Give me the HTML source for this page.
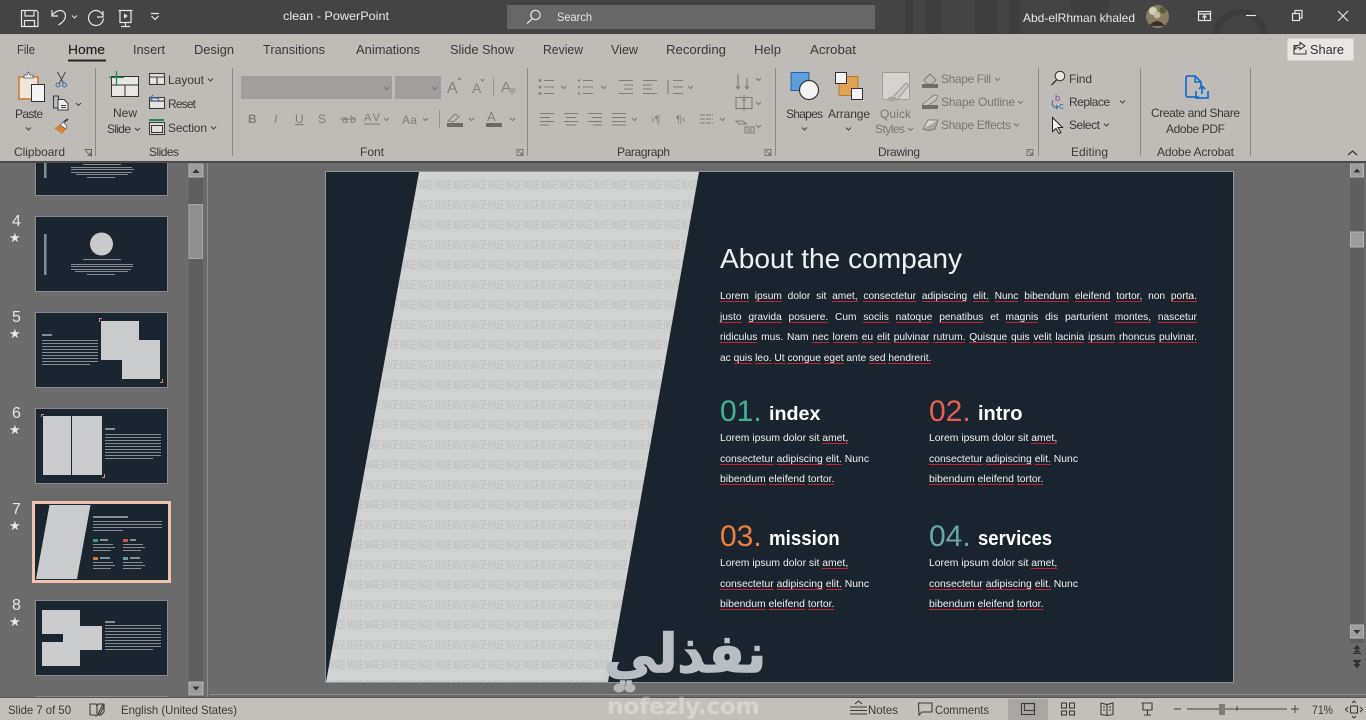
<!DOCTYPE html>
<html lang="en"><head><meta charset="utf-8"><title>clean - PowerPoint</title>
<style>
html,body{margin:0;padding:0;background:#6b6b6b;width:1366px;height:720px;overflow:hidden}
body{position:relative;font-family:"Liberation Sans",sans-serif}
svg{position:absolute;left:0;top:0}
svg text{font-family:"Liberation Sans",sans-serif}
.t{font-size:12px;fill:#3a3a3a}
.tb{font-size:13px;fill:#3a3a3a}
.d{font-size:12px;fill:#787674}
.w{fill:#e8e8e8;font-size:12px}
.i{fill:none;stroke:#3c3c3c;stroke-width:1.1}
.g{fill:none;stroke:#7f7d7b;stroke-width:1.1}
.tw{fill:none;stroke:#e6e6e6;stroke-width:1.2}
.ch{fill:none;stroke:#444;stroke-width:1}
.chg{fill:none;stroke:#777;stroke-width:1}
.a{position:absolute;white-space:nowrap;color:#f0f0f0}
.img{position:absolute;left:326px;top:172px;width:907px;height:510px;background:#d1d2d2;clip-path:polygon(93px 0,373px 0,282px 510px,0 510px);overflow:hidden}
.img pre{position:absolute;left:3px;top:3px;margin:0;font:12.5px/20px "Liberation Sans",sans-serif;color:#bcbcbc;transform:scaleX(.403);transform-origin:0 0}
.l{left:720px;width:477px;font-size:10.2px;line-height:14px;text-align:justify;text-align-last:justify;white-space:normal}
.s{font-size:10.4px;line-height:14px}
u{text-decoration:none;background:repeating-linear-gradient(90deg,#dc2030 0 2px,#8f2a38 2px 3px) left bottom/100% 1.500px no-repeat}
.n{font-size:30px;line-height:34px}
.h{font-size:20px;font-weight:700;line-height:26px;color:#fff;transform-origin:0 0}
</style></head><body>
<svg width="1366" height="720" viewBox="0 0 1366 720">
<!-- backgrounds -->
<rect width="1366" height="720" fill="#6b6b6b"/>
<rect width="1366" height="34" fill="#444"/>
<g fill="#3e3e3e"><rect x="905" y="0" width="8" height="34"/><rect x="925" y="0" width="16" height="34"/><rect x="975" y="0" width="22" height="34"/><rect x="1010" y="0" width="10" height="34"/><circle cx="1090" cy="0" r="20"/><circle cx="1240" cy="36" r="24" fill="none" stroke="#3c3c3c" stroke-width="6"/></g>
<rect y="34" width="1366" height="127" fill="#bfbcb8"/>
<rect y="161" width="1366" height="2" fill="#4a4a49"/>
<rect x="189" y="163" width="14" height="535" fill="#5e5e5e"/>
<rect x="207" y="163" width="1" height="535" fill="#8e8e8e"/>
<rect x="1350" y="163" width="14" height="480" fill="#5f5f5f"/>
<rect x="210" y="694" width="1156" height="1" fill="#8f8f8f"/>

<!-- title bar -->
<g class="tw"><path d="M21.500 10.500h15l1.500 1.500v14.500h-16.500z"/><path d="M25 10.500v5.500h9v-5.500M24.500 26.500v-6h10v6"/></g>
<path class="tw" d="M52 10v6h6M52 15.500c3-3.500 5.500-5 8-5 3.500 0 5.500 2.500 5.500 5.500 0 3-2 6-7 9"/>
<path d="M72 15.500l2.500 2.500 2.500-2.500" fill="none" stroke="#ddd"/>
<path class="tw" d="M103 11v6h-6M103 15c-2-3-4.500-4.500-7-4.500-4 0-7.500 3.400-7.500 7.500s3.400 7.500 7.500 7.500 7-3 7.500-7"/>
<g class="tw"><path d="M118.500 10.500h14M120 10.500v12h11v-12M125.500 22.500v3.500M121 26.500h9"/></g><path d="M124 13.500l4 2.500-4 2.500z" fill="#e6e6e6"/>
<path d="M151 13.500h8M151.500 16l3.500 3.500 3.500-3.500" fill="none" stroke="#e6e6e6" stroke-width="1.200"/>
<text class="w" x="283" y="20" textLength="106" lengthAdjust="spacingAndGlyphs">clean  -  PowerPoint</text>
<rect x="507" y="5" width="368" height="24" fill="#676767"/>
<circle cx="535.500" cy="15" r="4.700" class="tw"/><path d="M532 19l-5 4.500" class="tw"/>
<text x="557" y="21" font-size="12" fill="#e4e4e4" textLength="35" lengthAdjust="spacingAndGlyphs">Search</text>
<text class="w" x="1023" y="22" textLength="112" lengthAdjust="spacingAndGlyphs">Abd-elRhman khaled</text>
<circle cx="1157.500" cy="16.500" r="11.500" fill="#8a7d63"/><circle cx="1153" cy="11" r="4" fill="#cfd1b8"/><circle cx="1163" cy="10" r="3.500" fill="#55603a"/><circle cx="1157" cy="15" r="3.400" fill="#c9b6a0"/><path d="M1149 26q8-10 16 0z" fill="#3c2f28"/>
<g class="tw"><rect x="1198.500" y="11.500" width="12" height="9"/><path d="M1198.500 14h12M1204.500 20v-4M1202.500 17.500l2-2 2 2"/></g>
<path d="M1246 15.500h10" class="tw"/>
<g class="tw"><rect x="1292.500" y="13.500" width="7" height="7"/><path d="M1295 13v-2.500h7v7.500h-2.500"/></g>
<path d="M1338 11l10 10M1348 11l-10 10" class="tw"/>

<!-- tabs -->
<text class="tb" x="17" y="54" textLength="18" lengthAdjust="spacingAndGlyphs">File</text>
<text x="68" y="54" textLength="37" lengthAdjust="spacingAndGlyphs" style="font-size:13px;fill:#222;stroke:#222;stroke-width:.2">Home</text>
<text class="tb" x="133" y="54" textLength="32" lengthAdjust="spacingAndGlyphs">Insert</text>
<text class="tb" x="194" y="54" textLength="40" lengthAdjust="spacingAndGlyphs">Design</text>
<text class="tb" x="263" y="54" textLength="62" lengthAdjust="spacingAndGlyphs">Transitions</text>
<text class="tb" x="356" y="54" textLength="64" lengthAdjust="spacingAndGlyphs">Animations</text>
<text class="tb" x="450" y="54" textLength="64" lengthAdjust="spacingAndGlyphs">Slide Show</text>
<text class="tb" x="543" y="54" textLength="40" lengthAdjust="spacingAndGlyphs">Review</text>
<text class="tb" x="611" y="54" textLength="27" lengthAdjust="spacingAndGlyphs">View</text>
<text class="tb" x="666" y="54" textLength="60" lengthAdjust="spacingAndGlyphs">Recording</text>
<text class="tb" x="754" y="54" textLength="27" lengthAdjust="spacingAndGlyphs">Help</text>
<text class="tb" x="810" y="54" textLength="46" lengthAdjust="spacingAndGlyphs">Acrobat</text>
<rect x="68" y="59.500" width="38" height="2" fill="#222"/>
<rect x="1287.500" y="38.500" width="66" height="22" rx="1.500" fill="#e9e7e4" stroke="#d4d2cf"/>
<path d="M1294 47.500v-2h3M1300 42.500l5 3.500-5 3.500v-2c-3 0-5 1-6 3 0-3 2-5 6-5.500zM1294 47v7h12v-4" class="i"/>
<text x="1310" y="54" font-size="13" fill="#2e2e2e" textLength="34" lengthAdjust="spacingAndGlyphs">Share</text>

<!-- separators -->
<g fill="#8b8986"><rect x="95" y="68" width="1" height="88"/><rect x="232" y="68" width="1" height="88"/><rect x="527" y="68" width="1" height="88"/><rect x="775" y="68" width="1" height="88"/><rect x="1038" y="68" width="1" height="88"/><rect x="1140" y="68" width="1" height="88"/><rect x="1250" y="68" width="1" height="88"/></g>

<!-- clipboard -->
<path d="M19 77h19v22H19z" fill="#efe6d9" stroke="#c57f33" stroke-width="1.600"/><path d="M24 77v-2h3l1.500-3 1.500 3h3v3h-9z" fill="#efefef" stroke="#555" stroke-width=".8"/>
<rect x="31.500" y="84.500" width="13" height="17" fill="#f5f5f5" stroke="#333"/>
<text class="t" x="15" y="118" textLength="28">Paste</text><path class="ch" d="M26 127.500l2.500 2.500 2.500-2.500"/>
<path d="M57.500 72l6 11M65.500 72l-6 11" stroke="#444" fill="none"/><circle cx="58" cy="85" r="2" fill="none" stroke="#3a6ea8"/><circle cx="64.500" cy="85" r="2" fill="none" stroke="#3a6ea8"/>
<path class="i" d="M53.500 96h5v12h-5z"/><path d="M58 99.500h6l4 4v6.500h-10z" fill="#eee" stroke="#3c3c3c"/><path d="M61 105.500h5M61 107.500h5" stroke="#444" fill="none"/><path class="ch" d="M76 103l2.500 2.500 2.500-2.500"/>
<path d="M54 128l6-3 6 4-4 5z" fill="#d28433"/><path d="M60 125l3-3 4 4-1 3z" fill="#eee" stroke="#555" stroke-width=".7"/><path d="M64 122l4-3" stroke="#444" stroke-width="2"/>

<!-- slides -->
<rect x="111.500" y="76.500" width="27" height="20" fill="#e9e7e4" stroke="#333"/><path d="M112 85h26M125 85v11" stroke="#333" fill="none"/>
<path d="M109 77.500h15M116.500 71v15" stroke="#1f8a58" stroke-width="1.300" fill="none"/>
<text class="t" x="113" y="117" textLength="24">New</text><text class="t" x="107" y="133" textLength="24">Slide</text><path class="ch" d="M135 128l2.500 2.500 2.500-2.500"/>
<g class="i"><rect x="149.500" y="73.500" width="15" height="11" fill="#e4e2df"/><path d="M150 77h14M157 77v7"/></g>
<text class="t" x="168" y="84" textLength="36">Layout</text><path class="ch" d="M208 78.500l2.500 2.500 2.500-2.500"/>
<g class="i"><rect x="149.500" y="97.500" width="15" height="11" fill="#e4e2df"/><path d="M150 101h14"/></g><path d="M150 98l3-3M150 98l3 3M150 98h6q3 0 3 4" stroke="#3f72ad" fill="none" stroke-width="1.200"/>
<text class="t" x="168" y="108" textLength="28">Reset</text>
<rect x="149" y="119" width="15" height="2" fill="#1f8a58"/><g class="i"><rect x="149.500" y="122.500" width="15" height="12" fill="#e4e2df"/><rect x="151.500" y="125.500" width="11" height="7"/></g>
<text class="t" x="168" y="132" textLength="39">Section</text><path class="ch" d="M211 126.500l2.500 2.500 2.500-2.500"/>

<!-- font -->
<rect x="241" y="76" width="151" height="23" fill="#a09f9d"/><rect x="395" y="76" width="46" height="23" fill="#a09f9d"/>
<path class="chg" d="M384 87l2.500 2.500 2.500-2.500M432 87l2.500 2.500 2.500-2.500"/>
<text x="447" y="93" font-size="16" fill="#85837f">A</text><text x="472" y="93" font-size="14" fill="#85837f">A</text>
<path class="chg" d="M458 80l1.500-2 1.500 2M481 79l1.500 2 1.500-2"/>
<rect x="493" y="77" width="1" height="20" fill="#9a9896"/>
<text x="501" y="92" font-size="15" fill="#85837f">A</text><path d="M510 88l5 0 1 3-4 4-3-3z" fill="#a7a5a2"/>
<g fill="#7f7d7b"><text x="248" y="123" font-size="12" font-weight="700">B</text><text x="274" y="123" font-size="12" font-style="italic">I</text><text x="295" y="123" font-size="12" style="text-decoration:underline">U</text><text x="318" y="123" font-size="12">S</text><text x="342" y="123" font-size="11" textLength="14">ab</text><text x="364" y="121" font-size="11" textLength="16">AV</text><text x="402" y="124" font-size="12" textLength="15">Aa</text></g>
<path d="M340 119h16M364 124h16" stroke="#7f7d7b" fill="none"/>
<path class="chg" d="M384 118l2.500 2.500 2.500-2.500M423 118l2.500 2.500 2.500-2.500M469 118l2.500 2.500 2.500-2.500M510 118l2.500 2.500 2.500-2.500"/>
<rect x="439" y="110" width="1" height="18" fill="#9a9896"/>
<path d="M448 121l7-7 4 3-6 5z" fill="none" stroke="#7f7d7b"/><rect x="447" y="123" width="16" height="4" fill="#6c6b69"/>
<text x="487" y="121" font-size="13" fill="#7f7d7b">A</text><rect x="486" y="123" width="16" height="4" fill="#6c6b69"/>
<text class="t" x="360" y="156" textLength="24">Font</text><path d="M517 149.500h6v6h-6z" fill="none" stroke="#777"/><path d="M518 150.500l4 4M522.500 152.500v2.500h-2.500" fill="none" stroke="#777"/>

<!-- paragraph -->
<g class="g">
<path d="M544 80.500h10M544 87h10M544 93.500h10M583 80.500h10M583 87h10M583 93.500h10"/>
<path d="M619 80.500h14M624 85h9M624 89h9M619 93.500h14M643 80.500h14M643 85h9M643 89h9M643 93.500h14"/>
<path d="M673 80.500h10M673 87h10M673 93.500h10M668 80v14"/>
<path d="M540 113.500h14M540 117.500h10M540 121.500h14M540 125h9M564 113.500h14M566 117.500h10M564 121.500h14M566 125h10M588 113.500h14M592 117.500h10M588 121.500h14M593 125h9M612 113.500h14M612 117.500h14M612 121.500h14M612 125h14"/>
<path d="M700 115h13M700 119h13M700 123h13" stroke-dasharray="5 1"/>
<path d="M738 74v15M736 86l2 3 2-3M747 78v11M745 86l2 3 2-3"/>
<rect x="736" y="97.500" width="16" height="11"/><path d="M744 95v16M742 100h4"/>
<path d="M736 121l7 0 3 3h-7zM745 127h9v6h-9zM747 129h5M747 131h5"/>
</g>
<g fill="#8a8886"><circle cx="540" cy="80.500" r="1.500"/><circle cx="540" cy="87" r="1.500"/><circle cx="540" cy="93.500" r="1.500"/><circle cx="579" cy="80.500" r="1.200"/><circle cx="579" cy="87" r="1.200"/><circle cx="579" cy="93.500" r="1.200"/></g>
<text x="651" y="123" font-size="11" fill="#7f7d7b">›¶</text><text x="676" y="123" font-size="11" fill="#7f7d7b">¶‹</text>
<path class="chg" d="M561 86l2.500 2.500 2.500-2.500M601 86l2.500 2.500 2.500-2.500M688 86l2.500 2.500 2.500-2.500M632 118l2.500 2.500 2.500-2.500M720 118l2.500 2.500 2.500-2.500M756 78l2.500 2.500 2.500-2.500M756 102l2.500 2.500 2.500-2.500M756 125l2.500 2.500 2.500-2.500"/>
<text class="t" x="617" y="156" textLength="53">Paragraph</text><path d="M765 149.500h6v6h-6z" fill="none" stroke="#777"/><path d="M766 150.500l4 4M770.500 152.500v2.500h-2.500" fill="none" stroke="#777"/>

<!-- drawing -->
<rect x="791" y="72.500" width="18" height="18" fill="#5a9fde" stroke="#2e5f96"/><circle cx="809" cy="90" r="9.500" fill="#f5f5f5" stroke="#333" stroke-width="1.200"/>
<text class="t" x="786" y="118" textLength="37">Shapes</text><path class="ch" d="M802 127.500l2.500 2.500 2.500-2.500"/>
<rect x="839" y="76.500" width="19" height="19" fill="#dfa155" stroke="#b97a2c"/><rect x="835.500" y="72.500" width="11" height="11" fill="#f3f3f3" stroke="#333"/><rect x="851.500" y="88.500" width="11" height="11" fill="#f3f3f3" stroke="#333"/>
<text class="t" x="828" y="118" textLength="42">Arrange</text><path class="ch" d="M846 127.500l2.500 2.500 2.500-2.500"/>
<rect x="882.500" y="72.500" width="27" height="27" rx="1.500" fill="#d5d3d0" stroke="#a09e9b"/><path d="M892 98l14-15 3 2-12 15z" fill="#c9c7c4" stroke="#9a9896"/><ellipse cx="892" cy="99" rx="4.500" ry="2.500" fill="#a9a7a4"/>
<text class="d" x="880" y="118" textLength="31">Quick</text><text class="d" x="875" y="133" textLength="30">Styles</text><path class="chg" d="M908 128l2.500 2.500 2.500-2.500"/>
<path d="M924 80l6-6 6 6-4 4h-5z" fill="#bdbbb8" stroke="#7f7d7b"/><rect x="922" y="84" width="16" height="4" fill="#6f6e6c"/>
<text class="d" x="941" y="83" textLength="50">Shape Fill</text><path class="chg" d="M995 78l2.500 2.500 2.500-2.500"/>
<path d="M923 104l11-9 4 1-2 4-9 6h-4z" fill="#c9c7c4" stroke="#8a8886"/><rect x="922" y="105" width="16" height="4" fill="#6f6e6c"/>
<text class="d" x="941" y="106" textLength="74">Shape Outline</text><path class="chg" d="M1018 101l2.500 2.500 2.500-2.500"/>
<path d="M923 129l5-9h10l-3 9z" fill="#d8d6d3" stroke="#7f7d7b"/><path d="M923 129q6 3 12 0l3-9" fill="#a9a7a4" stroke="#7f7d7b"/>
<text class="d" x="941" y="129" textLength="70">Shape Effects</text><path class="chg" d="M1014 123.500l2.500 2.500 2.500-2.500"/>
<text class="t" x="878" y="156" textLength="42">Drawing</text><path d="M1027 149.500h6v6h-6z" fill="none" stroke="#777"/><path d="M1028 150.500l4 4M1032.500 152.500v2.500h-2.500" fill="none" stroke="#777"/>

<!-- editing -->
<circle cx="1060" cy="76" r="4.800" fill="#e8e6e3" stroke="#333"/><path d="M1056.500 80l-5 5" stroke="#333" stroke-width="1.300"/>
<text class="t" x="1069" y="83" textLength="23">Find</text>
<text x="1055" y="101" font-size="9.500" fill="#a13c9c">b</text><text x="1059" y="109" font-size="9.500" fill="#2c6fb3">c</text><path d="M1053 100q-2 5 1 7h4M1056 105l2 2-2 2" stroke="#2c6fb3" fill="none"/>
<text class="t" x="1069" y="106" textLength="41">Replace</text><path class="ch" d="M1120 100.500l2.500 2.500 2.500-2.500"/>
<path d="M1052.500 117.500v14l3.500-3 3 5 2-1-3-5h4.500z" fill="#efefef" stroke="#222"/>
<text class="t" x="1069" y="129" textLength="31">Select</text><path class="ch" d="M1104 123.500l2.500 2.500 2.500-2.500"/>
<text class="t" x="1071" y="156" textLength="37">Editing</text>

<!-- acrobat -->
<path d="M1199 97h-11c-1.500 0-2-1-2-2V78c0-1.500 1-2 2-2h7l6 6v5" fill="none" stroke="#1b6fd0" stroke-width="1.800"/><path d="M1195 76v6h6" fill="none" stroke="#1b6fd0" stroke-width="1.500"/>
<path d="M1196 91v7h12v-7M1202 94v-8M1199 89l3-3 3 3" fill="none" stroke="#1b6fd0" stroke-width="1.800"/>
<text class="t" x="1151" y="117" textLength="89">Create and Share</text><text class="t" x="1166" y="133" textLength="59">Adobe PDF</text>
<text class="t" x="1157" y="156" textLength="77">Adobe Acrobat</text>
<path d="M1348 155l4.500-4 4.500 4" fill="none" stroke="#333" stroke-width="1.200"/>

<!-- left scrollbar -->
<rect x="189" y="164" width="14" height="13" fill="#9c9c9c" stroke="#b5b5b5"/><path d="M192.500 173l3.500-4 3.500 4z" fill="#333"/>
<rect x="189" y="204.500" width="13.500" height="54" fill="#8f8f8f" stroke="#a8a8a8"/>
<rect x="189" y="682" width="14" height="13" fill="#9c9c9c" stroke="#b5b5b5"/><path d="M192.500 686.500l3.500 4 3.500-4z" fill="#333"/>
<!-- right scrollbar -->
<rect x="1350.500" y="164" width="13" height="13" fill="#9c9c9c" stroke="#b5b5b5"/><path d="M1353.500 172.500l3.500-4 3.500 4z" fill="#333"/>
<rect x="1350.500" y="232" width="13" height="15" fill="#9c9c9c" stroke="#b5b5b5"/>
<rect x="1350.500" y="625" width="13" height="13" fill="#9c9c9c" stroke="#b5b5b5"/><path d="M1353.500 630l3.500 4 3.500-4z" fill="#333"/>
<g fill="#333"><path d="M1353.500 649l3.500-4.500 3.500 4.500zM1353.500 652.500l3.500-4 3.500 4zM1353 653h8v1h-8z"/><path d="M1353.500 664l3.500 4.500 3.500-4.500zM1353.500 661l3.500 4 3.500-4zM1353 660h8v1h-8z"/></g>

<!-- thumbnails -->
<g fill="#1b2530" stroke="#8a8a8a"><rect x="35.500" y="150" width="132" height="45.500"/><rect x="35.500" y="216.500" width="132" height="75"/><rect x="35.500" y="312.500" width="132" height="75"/><rect x="35.500" y="408.500" width="132" height="75"/><rect x="35.500" y="600.500" width="132" height="75"/><rect x="35.500" y="696.500" width="132" height="10"/></g>
<rect x="33.500" y="502.500" width="136" height="79" fill="#1b2530" stroke="#f0c3b0" stroke-width="3"/>
<g fill="#c9cbcc">
<circle cx="101.500" cy="244" r="11.500" fill="#c8cacb"/>
<rect x="101" y="321" width="38" height="39"/><rect x="122" y="340" width="38" height="39"/>
<rect x="43" y="416" width="28" height="59"/><rect x="72" y="416" width="30" height="59"/>
<path d="M49.500 505h41l-13.500 74H36z"/>
<path d="M42 610h38v16h22v24H80v16H42v-24h21v-8H42z"/>
</g>
<g fill="#d28a83"><path d="M99 318h3v1h-2v3h-1zM163 383h-3v-1h2v-3h1zM41 414h3v1h-2v2h-1zM105 478h-3v-1h2v-3h1z"/></g>
<g fill="#c9cbce" opacity=".62">
<rect x="71" y="167" width="61" height="1"/><rect x="71" y="169" width="63" height="1"/><rect x="71" y="172" width="61" height="1"/><rect x="76" y="174" width="52" height="1"/><rect x="83" y="164" width="38" height="1"/><rect x="87" y="177" width="28" height="1"/>
<rect x="83" y="259" width="38" height="1"/><rect x="71" y="264" width="62" height="1"/><rect x="71" y="266" width="62" height="1"/><rect x="71" y="269" width="60" height="1"/><rect x="75" y="271" width="53" height="1"/><rect x="87" y="274" width="28" height="1"/>
<rect x="44" y="234" width="2.500" height="41"/><rect x="44" y="163" width="2.500" height="15"/>
<rect x="42" y="334" width="10" height="2"/><rect x="42" y="340" width="56" height="1"/><rect x="42" y="343" width="56" height="1"/><rect x="42" y="346" width="56" height="1"/><rect x="42" y="349" width="56" height="1"/><rect x="42" y="352" width="56" height="1"/><rect x="42" y="355" width="56" height="1"/><rect x="42" y="358" width="56" height="1"/><rect x="42" y="361" width="56" height="1"/><rect x="42" y="364" width="48" height="1"/>
<rect x="105" y="428" width="10" height="2"/><rect x="105" y="434" width="56" height="1"/><rect x="105" y="437" width="56" height="1"/><rect x="105" y="440" width="56" height="1"/><rect x="105" y="443" width="56" height="1"/><rect x="105" y="446" width="56" height="1"/><rect x="105" y="449" width="56" height="1"/><rect x="105" y="452" width="56" height="1"/><rect x="105" y="455" width="56" height="1"/><rect x="105" y="458" width="48" height="1"/>
<rect x="105" y="621" width="10" height="2"/><rect x="105" y="625" width="56" height="1"/><rect x="105" y="628" width="56" height="1"/><rect x="105" y="631" width="56" height="1"/><rect x="105" y="634" width="56" height="1"/><rect x="105" y="637" width="56" height="1"/><rect x="105" y="640" width="56" height="1"/><rect x="105" y="643" width="56" height="1"/><rect x="105" y="646" width="56" height="1"/><rect x="105" y="649" width="48" height="1"/>
<rect x="93" y="516" width="35" height="2"/><rect x="93" y="521" width="69" height="1"/><rect x="93" y="524" width="69" height="1"/><rect x="93" y="527" width="69" height="1"/><rect x="93" y="530" width="30" height="1"/>
<rect x="100" y="539" width="8" height="2"/><rect x="130" y="539" width="6" height="2"/><rect x="100" y="557" width="10" height="2"/><rect x="130" y="557" width="10" height="2"/>
<rect x="93" y="544" width="20" height="1"/><rect x="93" y="547" width="22" height="1"/><rect x="93" y="550" width="18" height="1"/><rect x="123" y="544" width="20" height="1"/><rect x="123" y="547" width="22" height="1"/><rect x="123" y="550" width="18" height="1"/>
<rect x="93" y="562" width="20" height="1"/><rect x="93" y="565" width="22" height="1"/><rect x="93" y="568" width="18" height="1"/><rect x="123" y="562" width="20" height="1"/><rect x="123" y="565" width="22" height="1"/><rect x="123" y="568" width="18" height="1"/>
</g>
<rect x="93" y="539" width="5" height="3" fill="#2f9f8a"/><rect x="123" y="539" width="5" height="3" fill="#d8504a"/><rect x="93" y="557" width="5" height="3" fill="#cf7a3a"/><rect x="123" y="557" width="5" height="3" fill="#6a9ea2"/>
<!-- numbers -->
<g fill="#e4e4e4"><text x="12" y="226" style="font-size:16px">4</text><text x="12" y="322" style="font-size:16px">5</text><text x="12" y="418" style="font-size:16px">6</text><text x="12" y="514" style="font-size:16px">7</text><text x="12" y="610" style="font-size:16px">8</text></g>
<g fill="#e8e8e8"><text x="9" y="242" style="font-size:13px">★</text><text x="9" y="338" style="font-size:13px">★</text><text x="9" y="434" style="font-size:13px">★</text><text x="9" y="530" style="font-size:13px">★</text><text x="9" y="626" style="font-size:13px">★</text></g>

<!-- ribbon cover above scrolled thumbnail -->
<rect x="0" y="140" width="186" height="21" fill="#bfbcb8"/>
<text class="t" x="14" y="156" textLength="51">Clipboard</text>
<path d="M84.500 149.500h7v7" fill="none" stroke="#666"/><path d="M85.500 150.500l5 5M90.500 152.500v3h-3" fill="none" stroke="#666"/>
<rect x="95" y="140" width="1" height="16" fill="#8b8986"/>
<text class="t" x="149" y="156" textLength="30">Slides</text>
<rect y="161" width="186" height="2" fill="#4a4a49"/>

<!-- slide -->
<rect x="325.500" y="171.500" width="908" height="511" fill="#1a242e" stroke="#8f9598"/>

<!-- status bar -->
<rect x="0" y="697" width="1366" height="1" fill="#555"/>
<rect x="0" y="698" width="1366" height="22" fill="#c3c0bb"/>
<text class="t" x="8" y="714" textLength="63" lengthAdjust="spacingAndGlyphs" style="font-size:12px">Slide 7 of 50</text>
<path class="i" d="M90 704h6l1 2 1-2h6v8l-3 3h-4l-1 1-1-1h-5zM97 706v8M104 706l-4 8-2 1 .5-2 4-8z"/>
<text class="t" x="121" y="714" textLength="116" lengthAdjust="spacingAndGlyphs" style="font-size:12px">English (United States)</text>
<path class="i" d="M850 707h17M850 710.500h17M850 714h17M855 704l3.500-3 3.500 3"/>
<text class="t" x="868" y="714" textLength="30" lengthAdjust="spacingAndGlyphs" style="font-size:12px">Notes</text>
<path class="i" d="M918.500 703h13.500v9h-10l-3 3z"/>
<text class="t" x="935" y="714" textLength="54" lengthAdjust="spacingAndGlyphs" style="font-size:12px">Comments</text>
<rect x="1008" y="699" width="40" height="21" fill="#a9a7a3"/>
<g class="i"><rect x="1021.500" y="703.500" width="13" height="11"/><rect x="1024.500" y="703.500" width="10" height="7"/></g>
<g class="i"><rect x="1061.500" y="703" width="5" height="5"/><rect x="1069.500" y="703" width="5" height="5"/><rect x="1061.500" y="711" width="5" height="4"/><rect x="1069.500" y="711" width="5" height="4"/></g>
<path class="i" d="M1101 703l6 1.500 6-1.500v11.500l-6 1-6-1zM1107 704.500v11M1103 707h2M1103 710h2M1109 707h2M1109 710h2"/>
<path class="i" d="M1141.500 703h11M1143 703v7h9v-7M1147.500 710v4.500M1144 715h7"/>
<path d="M1174 709h7M1187 709h100M1291 709h8M1295 705v8" stroke="#444" fill="none"/><path d="M1237 706v5" stroke="#444"/>
<rect x="1219" y="704" width="6" height="11" fill="#807e7c"/>
<text class="t" x="1312" y="714" textLength="21" lengthAdjust="spacingAndGlyphs">71%</text>
<g class="i"><rect x="1350.500" y="706" width="7" height="7"/><path d="M1348 707l-2.500 2.500 2.500 2.500M1360 707l2.500 2.500-2.500 2.500M1352 703l2-2 2 2M1352 716l2 2 2-2"/></g>
</svg>

<div class="img"><pre>IMAGE IMAGE IMAGE IMAGE IMAGE IMAGE IMAGE IMAGE IMAGE IMAGE IMAGE IMAGE IMAGE IMAGE IMAGE IMAGE IMAGE IMAGE IMAGE IMAGE IMAGE IMAGE
IMAGE IMAGE IMAGE IMAGE IMAGE IMAGE IMAGE IMAGE IMAGE IMAGE IMAGE IMAGE IMAGE IMAGE IMAGE IMAGE IMAGE IMAGE IMAGE IMAGE IMAGE IMAGE
IMAGE IMAGE IMAGE IMAGE IMAGE IMAGE IMAGE IMAGE IMAGE IMAGE IMAGE IMAGE IMAGE IMAGE IMAGE IMAGE IMAGE IMAGE IMAGE IMAGE IMAGE IMAGE
IMAGE IMAGE IMAGE IMAGE IMAGE IMAGE IMAGE IMAGE IMAGE IMAGE IMAGE IMAGE IMAGE IMAGE IMAGE IMAGE IMAGE IMAGE IMAGE IMAGE IMAGE IMAGE
IMAGE IMAGE IMAGE IMAGE IMAGE IMAGE IMAGE IMAGE IMAGE IMAGE IMAGE IMAGE IMAGE IMAGE IMAGE IMAGE IMAGE IMAGE IMAGE IMAGE IMAGE IMAGE
IMAGE IMAGE IMAGE IMAGE IMAGE IMAGE IMAGE IMAGE IMAGE IMAGE IMAGE IMAGE IMAGE IMAGE IMAGE IMAGE IMAGE IMAGE IMAGE IMAGE IMAGE IMAGE
IMAGE IMAGE IMAGE IMAGE IMAGE IMAGE IMAGE IMAGE IMAGE IMAGE IMAGE IMAGE IMAGE IMAGE IMAGE IMAGE IMAGE IMAGE IMAGE IMAGE IMAGE IMAGE
IMAGE IMAGE IMAGE IMAGE IMAGE IMAGE IMAGE IMAGE IMAGE IMAGE IMAGE IMAGE IMAGE IMAGE IMAGE IMAGE IMAGE IMAGE IMAGE IMAGE IMAGE IMAGE
IMAGE IMAGE IMAGE IMAGE IMAGE IMAGE IMAGE IMAGE IMAGE IMAGE IMAGE IMAGE IMAGE IMAGE IMAGE IMAGE IMAGE IMAGE IMAGE IMAGE IMAGE IMAGE
IMAGE IMAGE IMAGE IMAGE IMAGE IMAGE IMAGE IMAGE IMAGE IMAGE IMAGE IMAGE IMAGE IMAGE IMAGE IMAGE IMAGE IMAGE IMAGE IMAGE IMAGE IMAGE
IMAGE IMAGE IMAGE IMAGE IMAGE IMAGE IMAGE IMAGE IMAGE IMAGE IMAGE IMAGE IMAGE IMAGE IMAGE IMAGE IMAGE IMAGE IMAGE IMAGE IMAGE IMAGE
IMAGE IMAGE IMAGE IMAGE IMAGE IMAGE IMAGE IMAGE IMAGE IMAGE IMAGE IMAGE IMAGE IMAGE IMAGE IMAGE IMAGE IMAGE IMAGE IMAGE IMAGE IMAGE
IMAGE IMAGE IMAGE IMAGE IMAGE IMAGE IMAGE IMAGE IMAGE IMAGE IMAGE IMAGE IMAGE IMAGE IMAGE IMAGE IMAGE IMAGE IMAGE IMAGE IMAGE IMAGE
IMAGE IMAGE IMAGE IMAGE IMAGE IMAGE IMAGE IMAGE IMAGE IMAGE IMAGE IMAGE IMAGE IMAGE IMAGE IMAGE IMAGE IMAGE IMAGE IMAGE IMAGE IMAGE
IMAGE IMAGE IMAGE IMAGE IMAGE IMAGE IMAGE IMAGE IMAGE IMAGE IMAGE IMAGE IMAGE IMAGE IMAGE IMAGE IMAGE IMAGE IMAGE IMAGE IMAGE IMAGE
IMAGE IMAGE IMAGE IMAGE IMAGE IMAGE IMAGE IMAGE IMAGE IMAGE IMAGE IMAGE IMAGE IMAGE IMAGE IMAGE IMAGE IMAGE IMAGE IMAGE IMAGE IMAGE
IMAGE IMAGE IMAGE IMAGE IMAGE IMAGE IMAGE IMAGE IMAGE IMAGE IMAGE IMAGE IMAGE IMAGE IMAGE IMAGE IMAGE IMAGE IMAGE IMAGE IMAGE IMAGE
IMAGE IMAGE IMAGE IMAGE IMAGE IMAGE IMAGE IMAGE IMAGE IMAGE IMAGE IMAGE IMAGE IMAGE IMAGE IMAGE IMAGE IMAGE IMAGE IMAGE IMAGE IMAGE
IMAGE IMAGE IMAGE IMAGE IMAGE IMAGE IMAGE IMAGE IMAGE IMAGE IMAGE IMAGE IMAGE IMAGE IMAGE IMAGE IMAGE IMAGE IMAGE IMAGE IMAGE IMAGE
IMAGE IMAGE IMAGE IMAGE IMAGE IMAGE IMAGE IMAGE IMAGE IMAGE IMAGE IMAGE IMAGE IMAGE IMAGE IMAGE IMAGE IMAGE IMAGE IMAGE IMAGE IMAGE
IMAGE IMAGE IMAGE IMAGE IMAGE IMAGE IMAGE IMAGE IMAGE IMAGE IMAGE IMAGE IMAGE IMAGE IMAGE IMAGE IMAGE IMAGE IMAGE IMAGE IMAGE IMAGE
IMAGE IMAGE IMAGE IMAGE IMAGE IMAGE IMAGE IMAGE IMAGE IMAGE IMAGE IMAGE IMAGE IMAGE IMAGE IMAGE IMAGE IMAGE IMAGE IMAGE IMAGE IMAGE
IMAGE IMAGE IMAGE IMAGE IMAGE IMAGE IMAGE IMAGE IMAGE IMAGE IMAGE IMAGE IMAGE IMAGE IMAGE IMAGE IMAGE IMAGE IMAGE IMAGE IMAGE IMAGE
IMAGE IMAGE IMAGE IMAGE IMAGE IMAGE IMAGE IMAGE IMAGE IMAGE IMAGE IMAGE IMAGE IMAGE IMAGE IMAGE IMAGE IMAGE IMAGE IMAGE IMAGE IMAGE
IMAGE IMAGE IMAGE IMAGE IMAGE IMAGE IMAGE IMAGE IMAGE IMAGE IMAGE IMAGE IMAGE IMAGE IMAGE IMAGE IMAGE IMAGE IMAGE IMAGE IMAGE IMAGE
IMAGE IMAGE IMAGE IMAGE IMAGE IMAGE IMAGE IMAGE IMAGE IMAGE IMAGE IMAGE IMAGE IMAGE IMAGE IMAGE IMAGE IMAGE IMAGE IMAGE IMAGE IMAGE</pre></div>

<div class="a" style="left:720px;top:242px;font-size:28.1px;line-height:34px;color:#eef1f3">About the company</div>
<div class="a l" style="top:290px"><u>Lorem</u> <u>ipsum</u> dolor sit <u>amet,</u> <u>consectetur</u> <u>adipiscing</u> <u>elit.</u> <u>Nunc</u> <u>bibendum</u> <u>eleifend</u> <u>tortor,</u> non <u>porta.</u></div>
<div class="a l" style="top:311px"><u>justo</u> <u>gravida</u> <u>posuere.</u> Cum <u>sociis</u> <u>natoque</u> <u>penatibus</u> et <u>magnis</u> dis parturient <u>montes,</u> <u>nascetur</u></div>
<div class="a l" style="top:331px"><u>ridiculus</u> mus. Nam <u>nec</u> <u>lorem</u> <u>eu</u> <u>elit</u> <u>pulvinar</u> <u>rutrum.</u> <u>Quisque</u> <u>quis</u> <u>velit</u> <u>lacinia</u> <u>ipsum</u> <u>rhoncus</u> <u>pulvinar.</u></div>
<div class="a l" style="top:352px;text-align-last:left">ac <u>quis</u> <u>leo.</u> <u>Ut</u> <u>congue</u> <u>eget</u> ante <u>sed</u> <u>hendrerit.</u></div>

<div class="a n" style="left:720px;top:395px;color:#3fb29c">01.</div><div class="a h" style="left:769px;top:401px;font-size:19.7px">index</div>
<div class="a n" style="left:929px;top:395px;color:#e8604f">02.</div><div class="a h" style="left:978px;top:401px">intro</div>
<div class="a n" style="left:720px;top:520px;color:#e8803f">03.</div><div class="a h" style="left:769px;top:526px;transform:scaleX(.935)">mission</div>
<div class="a n" style="left:929px;top:520px;color:#6aa6aa">04.</div><div class="a h" style="left:978px;top:526px;transform:scaleX(.925)">services</div>

<div class="a s" style="left:720px;top:432px">Lorem ipsum dolor sit <u>amet,</u></div>
<div class="a s" style="left:720px;top:453px"><u>consectetur</u> <u>adipiscing</u> <u>elit.</u> Nunc</div>
<div class="a s" style="left:720px;top:473px"><u>bibendum</u> <u>eleifend</u> <u>tortor.</u></div>
<div class="a s" style="left:929px;top:432px">Lorem ipsum dolor sit <u>amet,</u></div>
<div class="a s" style="left:929px;top:453px"><u>consectetur</u> <u>adipiscing</u> <u>elit.</u> Nunc</div>
<div class="a s" style="left:929px;top:473px"><u>bibendum</u> <u>eleifend</u> <u>tortor.</u></div>
<div class="a s" style="left:720px;top:557px">Lorem ipsum dolor sit <u>amet,</u></div>
<div class="a s" style="left:720px;top:578px"><u>consectetur</u> <u>adipiscing</u> <u>elit.</u> Nunc</div>
<div class="a s" style="left:720px;top:598px"><u>bibendum</u> <u>eleifend</u> <u>tortor.</u></div>
<div class="a s" style="left:929px;top:557px">Lorem ipsum dolor sit <u>amet,</u></div>
<div class="a s" style="left:929px;top:578px"><u>consectetur</u> <u>adipiscing</u> <u>elit.</u> Nunc</div>
<div class="a s" style="left:929px;top:598px"><u>bibendum</u> <u>eleifend</u> <u>tortor.</u></div>

<div class="a" dir="rtl" style="left:600px;top:620px;width:170px;text-align:center;font:700 53px/70px 'DejaVu Sans',sans-serif;color:#b9bec4;-webkit-text-stroke:1.5px #b9bec4">نفذلي</div>
<svg width="1366" height="720" style="pointer-events:none"><ellipse cx="619" cy="688" rx="5.500" ry="4.500" fill="#b4b6b8"/><ellipse cx="630" cy="688" rx="5.500" ry="4.500" fill="#b4b6b8"/></svg>
<div class="a" style="left:607px;top:690px;font:700 23.5px/32px 'DejaVu Sans',sans-serif;letter-spacing:-.45px;color:rgba(255,255,255,.32)">nofezly.com</div>
</body></html>
